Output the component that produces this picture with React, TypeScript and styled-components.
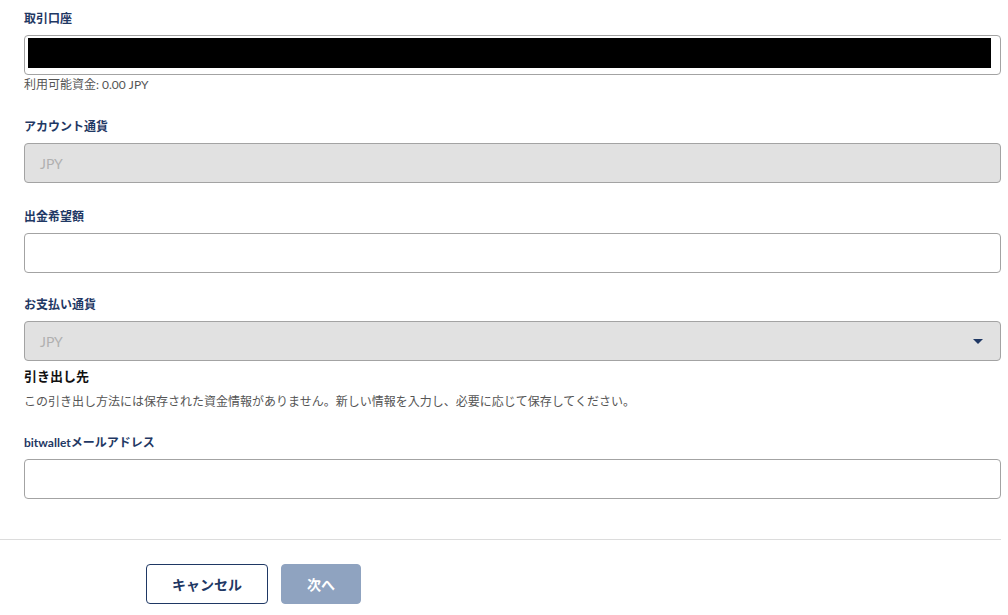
import React from "react";
import styled, { createGlobalStyle } from "styled-components";

const Global = createGlobalStyle`
  html, body { margin: 0; padding: 0; background: #fff; }
  body { font-family: "Noto Sans CJK JP", "Noto Sans", "Lato", sans-serif; }
  * { box-sizing: border-box; }
`;

const Page = styled.div`
  width: 1008px;
  display: flex;
  flex-direction: column;
`;

const Form = styled.div`
  display: flex;
  flex-direction: column;
  padding: 11px 7px 0 24px;
`;

const Field = styled.div<{ $mt?: number }>`
  display: flex;
  flex-direction: column;
  margin-top: ${(p) => p.$mt ?? 0}px;
`;

const Label = styled.label`
  font-size: 12px;
  line-height: 16px;
  font-weight: 700;
  color: #1f3864;
  margin-bottom: 8px;
  font-family: "Lato", "Noto Sans CJK JP", sans-serif;
`;

const InputBox = styled.div<{ $disabled?: boolean }>`
  position: relative;
  height: 40px;
  border: 1px solid #a3a3a3;
  border-radius: 4px;
  background: ${(p) => (p.$disabled ? "#e1e1e1" : "#fff")};
  display: flex;
  align-items: center;
  padding: 0 15px;
  font-family: "Lato", "Noto Sans", sans-serif;
  font-size: 14px;
  color: #b0b0b0;
`;

const Redacted = styled.div`
  position: absolute;
  left: 3px;
  top: 2px;
  right: 9px;
  bottom: 6px;
  background: #000;
`;

const Helper = styled.div`
  margin-top: 2px;
  font-size: 12px;
  line-height: 16px;
  color: #555;
  font-family: "Lato", "Noto Sans CJK JP", sans-serif;
`;

const Arrow = styled.span`
  margin-left: auto;
  margin-right: 2px;
  width: 0;
  height: 0;
  border-left: 5px solid transparent;
  border-right: 5px solid transparent;
  border-top: 5px solid #1f3864;
`;

const SectionTitle = styled.div`
  margin-top: 6px;
  font-size: 13px;
  line-height: 18px;
  font-weight: 700;
  color: #111;
`;

const Desc = styled.div`
  margin-top: 8px;
  font-size: 12px;
  line-height: 16px;
  color: #555;
`;

const Divider = styled.hr`
  margin: 40px 7px 0 0;
  border: none;
  border-top: 1px solid #dcdcdc;
  height: 0;
`;

const Buttons = styled.div`
  display: flex;
  gap: 13px;
  padding: 24px 0 0 146px;
`;

const Button = styled.button<{ $primary?: boolean }>`
  height: 40px;
  padding: 0;
  width: ${(p) => (p.$primary ? 80 : 122)}px;
  border-radius: 4px;
  border: 1px solid ${(p) => (p.$primary ? "#8fa3c0" : "#1f3864")};
  background: ${(p) => (p.$primary ? "#8fa3c0" : "#fff")};
  color: ${(p) => (p.$primary ? "#fff" : "#1f3864")};
  font-family: "Noto Sans CJK JP", sans-serif;
  font-size: 14px;
  font-weight: 700;
`;

export default function App() {
  return (
    <Page>
      <Global />
      <Form>
        <Field>
          <Label>取引口座</Label>
          <InputBox>
            <Redacted />
          </InputBox>
          <Helper>利用可能資金: 0.00 JPY</Helper>
        </Field>
        <Field $mt={26}>
          <Label>アカウント通貨</Label>
          <InputBox $disabled>JPY</InputBox>
        </Field>
        <Field $mt={26}>
          <Label>出金希望額</Label>
          <InputBox />
        </Field>
        <Field $mt={24}>
          <Label>お支払い通貨</Label>
          <InputBox $disabled>
            JPY
            <Arrow />
          </InputBox>
        </Field>
        <SectionTitle>引き出し先</SectionTitle>
        <Desc>
          この引き出し方法には保存された資金情報がありません。新しい情報を入力し、必要に応じて保存してください。
        </Desc>
        <Field $mt={26}>
          <Label>bitwalletメールアドレス</Label>
          <InputBox />
        </Field>
      </Form>
      <Divider />
      <Buttons>
        <Button>キャンセル</Button>
        <Button $primary>次へ</Button>
      </Buttons>
    </Page>
  );
}
